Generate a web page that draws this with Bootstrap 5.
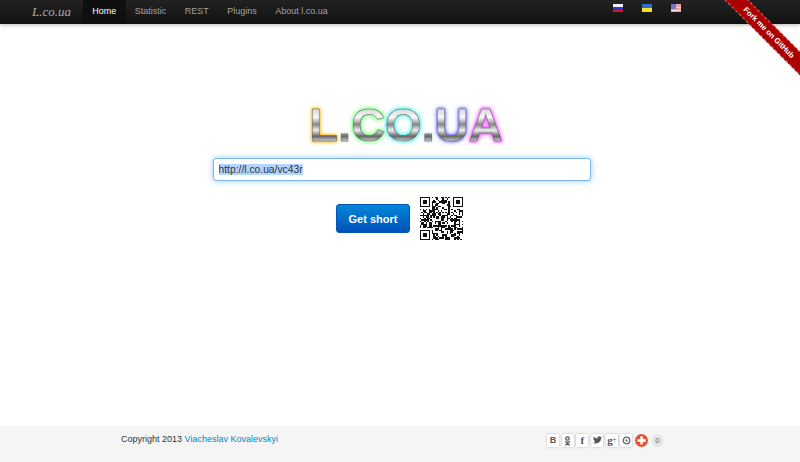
<!DOCTYPE html>
<html lang="en">
<head>
<meta charset="utf-8">
<title>L.co.ua</title>
<link rel="stylesheet" href="https://cdn.jsdelivr.net/npm/bootstrap@5.3.0/dist/css/bootstrap.min.css">
<style>
html,body{height:462px;overflow:hidden}
body{font-family:"Liberation Sans",Arial,sans-serif;font-size:10px;color:#333;background:#fff;display:flex;flex-direction:column}
.topbar{height:24px;padding:0;background:linear-gradient(#222,#111);box-shadow:0 1px 4px rgba(0,0,0,.3);flex:none;align-items:stretch;flex-wrap:nowrap;justify-content:flex-start}
.brandmark{font:italic 13px "Liberation Serif",serif;color:#aaa;width:83px;padding-left:32px;display:flex;align-items:center;text-decoration:none}
.topnav{flex-direction:row;align-items:stretch}
.topnav .nav-item{display:flex}
.topnav .nav-link{font-size:9px;color:#a3a3a3;padding:0 9.25px;display:flex;align-items:center}
.topnav .nav-link.active{color:#fff;background:#0f0f0f}
.flagset{margin-left:auto;display:flex;gap:19px;align-items:flex-start;padding:4px 119px 0 0}
.flagset svg{display:block}
.ribbonclip{position:absolute;top:0;right:0;width:80px;height:80px;overflow:hidden;z-index:5}
.ribbonband{position:absolute;left:-11.5px;top:24px;width:120px;height:17px;background:#a00;transform:rotate(45deg);color:#fff;font:bold 7.6px/15px "Liberation Sans",sans-serif;text-align:center;border-top:1px dashed rgba(255,255,255,.45);border-bottom:1px dashed rgba(255,255,255,.45);white-space:nowrap}
.mainarea{flex:1 1 auto;display:flex;flex-direction:column;align-items:center;padding-left:3px}
.logoword{margin:67px 0 0 9px;height:67px;display:flex;align-items:center;font:700 47px/1 "Liberation Sans",sans-serif}
.logoword span{background:linear-gradient(#ddd 20%,#f8f8f8 35%,#888 50%,#eee 62%,#666 75%,#ccc 85%);-webkit-background-clip:text;background-clip:text;color:transparent;-webkit-text-stroke:.5px #666}
.g1{filter:drop-shadow(0 0 1px #f90) drop-shadow(0 0 2px #fc3)}.g2{filter:drop-shadow(0 0 1px #9c9)}.g3{filter:drop-shadow(0 0 1px #6f6) drop-shadow(0 0 2px #6f6)}.g4{filter:drop-shadow(0 0 1px #3ee) drop-shadow(0 0 2px #3ee)}.g5{filter:drop-shadow(0 0 1px #7cf)}.g6{filter:drop-shadow(0 0 1px #55f) drop-shadow(0 0 2px #77f)}.g7{filter:drop-shadow(0 0 1px #e4f) drop-shadow(0 0 2px #e4f)}
.urlbox{width:378px;height:23px;font:10.3px "Liberation Sans",sans-serif;color:#333;padding:0 5px;border:1px solid #7ab8ea;border-radius:3px;box-shadow:0 0 6px rgba(82,168,236,.6)}
.urlbox:focus{border-color:#7ab8ea;box-shadow:0 0 6px rgba(82,168,236,.6)}
.urlbox::selection{background:#b4d5fe;color:#333}
.actionrow{margin-top:16px;margin-left:-4px;gap:10px}
.shortbtn{width:74px;height:29px;padding:0;font:bold 11px "Liberation Sans",sans-serif;color:#fff;background:linear-gradient(#0088d8,#0050bb);border:1px solid #0055b5;border-radius:3px}
.pagefoot{height:36px;flex:none;background:#f5f5f5;position:relative;display:flex;padding:0 0 0 121px;align-items:flex-start}
.copyline{font-size:9px;color:#333;margin-top:7px;width:426px}
.copyline a{color:#0088cc;text-decoration:none}
.sharerow{display:flex;gap:2.7px;margin-top:8px;align-items:center}
.sharebtn{width:12px;height:13px;background:#fff;border:0;box-shadow:0 0 2px rgba(0,0,0,.3);border-radius:1px;color:#555;font:bold 9px/13px "Liberation Sans",sans-serif;text-align:center;white-space:nowrap;overflow:hidden}
.sharebtn.serifed{font:bold 11px/13px "Liberation Serif",serif}
.tinyplus{font-size:6px;vertical-align:2px}
.sharebtn svg{display:block;margin:2px auto 0}
.plusdisc{width:13px;height:13px;border-radius:50%;background:#e8502f;margin-right:1px;display:flex}
.countdisc{width:11px;height:13px;border-radius:6px;background:#e6e6e6;color:#666;font:7.5px/13px "Liberation Sans",sans-serif;text-align:center}
</style>
</head>
<body>
<nav class="navbar topbar">
  <a class="brandmark" href="#">L.co.ua</a>
  <ul class="nav topnav">
    <li class="nav-item"><a class="nav-link active" href="#">Home</a></li>
    <li class="nav-item"><a class="nav-link" href="#">Statistic</a></li>
    <li class="nav-item"><a class="nav-link" href="#">REST</a></li>
    <li class="nav-item"><a class="nav-link" href="#">Plugins</a></li>
    <li class="nav-item"><a class="nav-link" href="#">About l.co.ua</a></li>
  </ul>
  <div class="flagset">
    <svg width="10" height="8" viewBox="0 0 10 8"><rect width="10" height="3" fill="#f2f2f6"/><rect y="3" width="10" height="2.5" fill="#2a3fc0"/><rect y="5.5" width="10" height="2.5" fill="#e0102a"/></svg>
    <svg width="10" height="8" viewBox="0 0 10 8"><rect width="10" height="4" fill="#2d6fc8"/><rect y="4" width="10" height="4" fill="#f6de2e"/></svg>
    <svg width="10" height="8" viewBox="0 0 10 8"><rect width="10" height="8" fill="#f0a0a0"/><rect y="3" width="10" height="1" fill="#f8d8d8"/><rect y="6" width="10" height="1" fill="#f8d8d8"/><rect width="5" height="5" fill="#6a78c8"/></svg>
  </div>
</nav>
<div class="ribbonclip"><a class="ribbonband d-block text-decoration-none" href="#">Fork me on GitHub</a></div>
<main class="mainarea">
  <h1 class="logoword" aria-label="L.CO.UA"><span class="g1">L</span><span class="g2">.</span><span class="g3">C</span><span class="g4">O</span><span class="g5">.</span><span class="g6">U</span><span class="g7">A</span></h1>
  <input id="shorturl" class="form-control urlbox" type="text" value="http://l.co.ua/vc43r" autofocus>
  <div class="d-flex align-items-center actionrow">
    <button class="btn shortbtn" type="button">Get short</button>
    <svg id="qrcode" width="43" height="43" viewBox="0 0 29 29" shape-rendering="crispEdges"><path id="qrpath" fill="#111" d="M0 0h7v7h-7zM1 1v5h5v-5zM2 2h3v3h-3zM22 0h7v7h-7zM23 1v5h5v-5zM24 2h3v3h-3zM0 22h7v7h-7zM1 23v5h5v-5zM2 24h3v3h-3z" fill-rule="evenodd"/></svg>
  </div>
</main>
<footer class="pagefoot">
  <div class="copyline">Copyright 2013 <a href="#">Viacheslav Kovalevskyi</a></div>
  <div class="sharerow">
    <div class="sharebtn">B</div>
    <div class="sharebtn"><svg width="7" height="10" viewBox="0 0 7 10"><circle cx="3.500" cy="2.500" r="1.700" fill="none" stroke="#555" stroke-width="1.200"/><path d="M1 5.500c1.500 1 3.500 1 5 0M3.500 6.200v1M1.500 9.500l2-2.300 2 2.300" fill="none" stroke="#555" stroke-width="1.200"/></svg></div>
    <div class="sharebtn serifed">f</div>
    <div class="sharebtn"><svg width="9" height="8" viewBox="0 0 24 20"><path fill="#555" d="M24 2.400c-.9.400-1.800.7-2.800.8 1-.6 1.800-1.600 2.200-2.700-1 .6-2 1-3.100 1.200A4.900 4.900 0 0 0 11.900 6.200C7.800 6 4.200 4 1.700.9c-1.300 2.200-.7 5.100 1.500 6.600-.8 0-1.600-.2-2.200-.6 0 2.300 1.600 4.400 3.900 4.900-.7.200-1.500.2-2.200.1.600 2 2.500 3.400 4.600 3.400A9.900 9.900 0 0 1 0 17.300 14 14 0 0 0 21.500 4.900c1-.7 1.800-1.500 2.500-2.500z"/></svg></div>
    <div class="sharebtn serifed">g<span class="tinyplus">+</span></div>
    <div class="sharebtn"><svg width="9" height="9" viewBox="0 0 9 9"><circle cx="4.500" cy="4.500" r="3.300" fill="none" stroke="#666" stroke-width="1.300"/><circle cx="4.500" cy="4.500" r="1.300" fill="#888"/></svg></div>
    <div class="plusdisc"><svg width="13" height="13" viewBox="0 0 13 13"><path fill="#fff" d="M5.300 2.500h2.400v2.800h2.800v2.400h-2.800v-2.800z"/><path fill="#fff" d="M5.300 2.500h2.400v8h-2.400zM2.500 5.300h8v2.400h-8z"/></svg></div>
    <div class="countdisc">0</div>
  </div>
</footer>
<script>
(function(){
  var i=document.getElementById('shorturl');i.focus();i.select();
  var s=12345,d='';
  function r(){s=(s*1103515245+12345)&0x7fffffff;return (s>>16)&1;}
  for(var y=0;y<29;y++)for(var x=0;x<29;x++){
    var v=r();
    var tl=x<8&&y<8,tr=x>20&&y<8,bl=x<8&&y>20;
    if(v&&!tl&&!tr&&!bl)d+='M'+x+' '+y+'h1v1h-1z';
  }
  var p=document.getElementById('qrpath');p.setAttribute('d',p.getAttribute('d')+d);
})();
</script>
<script src="https://cdn.jsdelivr.net/npm/bootstrap@5.3.0/dist/js/bootstrap.bundle.min.js"></script>
</body>
</html>
